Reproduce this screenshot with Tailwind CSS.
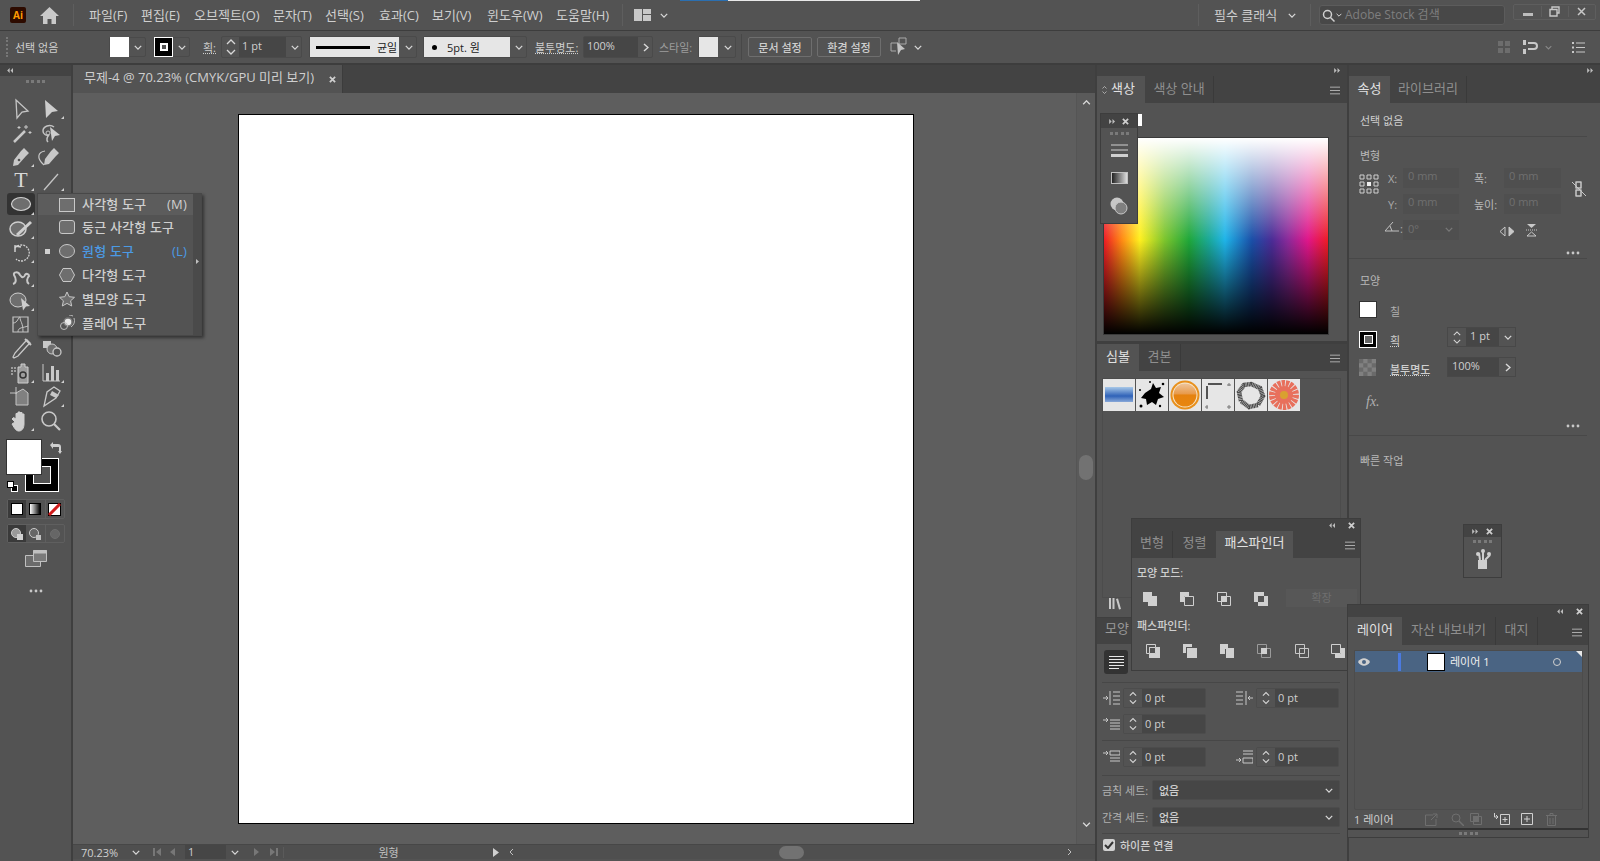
<!DOCTYPE html>
<html lang="ko">
<head>
<meta charset="UTF-8">
<title>Illustrator</title>
<script src="https://cdn.jsdelivr.net/npm/@tailwindcss/browser@4"></script>
</head>
<body class="relative w-[1600px] h-[861px] overflow-hidden bg-[#535353] text-[#cfcfcf] text-[12px] leading-none font-['Open_Sans','Noto_Sans_CJK_KR',sans-serif]">
<svg class="hidden">
  <symbol id="chev" viewBox="0 0 10 6"><path d="M1 1l4 4 4-4" fill="none" stroke="#d8d8d8" stroke-width="1.6"/></symbol>
  <symbol id="updown" viewBox="0 0 10 18"><path d="M1 6l4-4 4 4M1 12l4 4 4-4" fill="none" stroke="#d8d8d8" stroke-width="1.3"/></symbol>
  <symbol id="burger" viewBox="0 0 12 10"><path d="M0 1h12M0 5h12M0 9h12" stroke="#c0c0c0" stroke-width="1"/></symbol>
  <symbol id="dots" viewBox="0 0 14 4"><circle cx="2" cy="2" r="1.4" fill="#c8c8c8"/><circle cx="7" cy="2" r="1.4" fill="#c8c8c8"/><circle cx="12" cy="2" r="1.4" fill="#c8c8c8"/></symbol>
  <symbol id="close" viewBox="0 0 8 8"><path d="M1 1l6 6M7 1l-6 6" stroke="#cfcfcf" stroke-width="2"/></symbol>
  <symbol id="right2" viewBox="0 0 8 6"><path d="M0 0l3 3-3 3zM4 0l3 3-3 3z" fill="#bdbdbd"/></symbol>
  <symbol id="left2" viewBox="0 0 8 6"><path d="M3 0L0 3l3 3zM7 0L4 3l3 3z" fill="#bdbdbd"/></symbol>
  <symbol id="corner" viewBox="0 0 30 24"><path d="M28 19v3h-3z" fill="#d0d0d0"/></symbol>
</svg>

<!-- title bar -->
<header class="h-[31px] flex items-center border-b border-[#3d3d3d] relative text-[13px]">
  <div class="absolute left-[680px] top-0 w-[48px] h-[1px] bg-[#2b6fb0]"></div>
  <div class="absolute left-[728px] top-0 w-[192px] h-[1px] bg-[#e8e8e8]"></div>
  <div class="ml-[10px] w-[16px] h-[16px] bg-[#2d0b00] rounded-[2px] text-[#ff9a00] text-[10px] font-bold flex items-center justify-center">Ai</div>
  <svg class="ml-[14px] w-[19px] h-[18px]" viewBox="0 0 19 18"><path d="M9.5 1L0 10h3v8h4.5v-5h4v5H16v-8h3z" fill="#c9c9c9"/></svg>
  <div class="ml-[14px] w-[1px] h-[22px] bg-[#5e5e5e]"></div>
  <div class="ml-[15px] flex">
    <span class="w-[52px]">파일(F)</span><span class="w-[53px]">편집(E)</span><span class="w-[79px]">오브젝트(O)</span><span class="w-[52px]">문자(T)</span><span class="w-[54px]">선택(S)</span><span class="w-[53px]">효과(C)</span><span class="w-[55px]">보기(V)</span><span class="w-[69px]">윈도우(W)</span><span class="w-[66px]">도움말(H)</span>
  </div>
  <div class="w-[1px] h-[22px] bg-[#5e5e5e]"></div>
  <svg class="ml-[11px] w-[17px] h-[12px]" viewBox="0 0 17 12"><path d="M0 0h8v12H0zM9 0h8v5H9zM9 6h8v6H9z" fill="#c8c8c8"/></svg>
  <svg class="ml-[9px] w-[8px] h-[5px]"><use href="#chev"/></svg>
  <div class="ml-auto flex items-center">
    <div class="w-[1px] h-[22px] bg-[#5e5e5e]"></div>
    <span class="ml-[15px] w-[74px]">필수 클래식</span>
    <svg class="w-[8px] h-[5px]"><use href="#chev"/></svg>
    <div class="ml-[14px] w-[1px] h-[22px] bg-[#5e5e5e]"></div>
    <div class="ml-[8px] w-[186px] h-[20px] bg-[#484848] border border-[#5c5c5c] rounded-[3px] flex items-center text-[12px] text-[#7f7f7f]">
      <svg class="ml-[2px] w-[13px] h-[13px]" viewBox="0 0 13 13"><circle cx="5.5" cy="5.5" r="4" fill="none" stroke="#d0d0d0" stroke-width="1.5"/><path d="M8.5 8.5l4 4" stroke="#d0d0d0" stroke-width="1.5"/></svg>
      <svg class="ml-[1px] w-[6px] h-[4px]"><use href="#chev"/></svg>
      <span class="ml-[3px]">Adobe Stock 검색</span>
    </div>
    <div class="ml-[8px] mr-[4px] -mt-[7px] w-[83px] h-[16px] border border-[#5e5e5e] rounded-[2px] flex items-center">
      <div class="w-[28px] flex justify-center"><div class="w-[10px] h-[3px] mt-[5px] bg-[#bdbdbd]"></div></div>
      <div class="w-[28px] flex justify-center border-x border-[#5e5e5e]"><svg class="w-[11px] h-[11px]" viewBox="0 0 11 11"><path d="M3 3V1h7v6H8M1 3.5h7v6.5H1z" fill="none" stroke="#c8c8c8" stroke-width="1.4"/></svg></div>
      <div class="w-[27px] flex justify-center"><svg class="w-[9px] h-[9px]" viewBox="0 0 9 9"><path d="M1 1l7 7M8 1L1 8" stroke="#c8c8c8" stroke-width="1.5"/></svg></div>
    </div>
  </div>
</header>

<!-- control bar -->
<section class="h-[34px] flex items-center border-b-2 border-[#3d3d3d] text-[11px]">
  <div class="ml-[6px] w-[2px] h-[20px] border-l-2 border-dotted border-[#777]"></div>
  <span class="ml-[7px] w-[94px]">선택 없음</span>
  <div class="w-[37px] h-[20px] flex items-center border border-[#4a4a4a] rounded-[2px]"><div class="w-[19px] h-[20px] bg-white"></div><svg class="ml-[5px] w-[8px] h-[5px]"><use href="#chev"/></svg></div>
  <div class="ml-[7px] w-[37px] h-[20px] flex items-center border border-[#4a4a4a] rounded-[2px]"><div class="w-[19px] h-[20px] bg-black border border-white flex items-center justify-center"><div class="w-[8px] h-[8px] border-2 border-white bg-[#535353]"></div></div><svg class="ml-[5px] w-[8px] h-[5px]"><use href="#chev"/></svg></div>
  <span class="ml-[13px] w-[18px] underline decoration-dotted">획:</span>
  <div class="w-[81px] h-[22px] flex items-center border border-[#4a4a4a] rounded-[2px]">
    <svg class="ml-[4px] w-[10px] h-[18px]"><use href="#updown"/></svg>
    <span class="ml-[3px] w-[47px] h-[20px] bg-[#464646] flex items-center pl-[3px] pb-[3px]">1 pt</span>
    <svg class="ml-[5px] w-[8px] h-[5px]"><use href="#chev"/></svg>
  </div>
  <div class="ml-[7px] w-[108px] h-[22px] flex items-center border border-[#4a4a4a] rounded-[2px]">
    <div class="w-[89px] h-[20px] bg-[#e6e6e6] flex items-center text-[#222]"><div class="ml-[6px] w-[54px] h-[3px] bg-black"></div><span class="ml-[7px]">균일</span></div>
    <svg class="ml-[6px] w-[8px] h-[5px]"><use href="#chev"/></svg>
  </div>
  <div class="ml-[6px] w-[104px] h-[22px] flex items-center border border-[#4a4a4a] rounded-[2px]">
    <div class="w-[86px] h-[20px] bg-[#e6e6e6] flex items-center text-[#222]"><div class="ml-[8px] w-[5px] h-[5px] rounded-full bg-black"></div><span class="ml-[10px]">5pt. 원</span></div>
    <svg class="ml-[5px] w-[8px] h-[5px]"><use href="#chev"/></svg>
  </div>
  <span class="ml-[8px] w-[48px] underline decoration-dotted">불투명도:</span>
  <div class="w-[70px] h-[22px] flex items-center border border-[#4a4a4a] rounded-[2px]">
    <span class="w-[54px] h-[20px] bg-[#464646] flex items-center pl-[3px] pb-[3px]">100%</span>
    <svg class="ml-[5px] w-[6px] h-[9px]" viewBox="0 0 6 9"><path d="M1 1l4 3.5L1 8" fill="none" stroke="#d8d8d8" stroke-width="1.5"/></svg>
  </div>
  <span class="ml-[6px] w-[39px] text-[#9d9d9d]">스타일:</span>
  <div class="w-[38px] h-[22px] flex items-center border border-[#4a4a4a] rounded-[2px]"><div class="w-[19px] h-[20px] bg-[#e6e6e6]"></div><svg class="ml-[6px] w-[8px] h-[5px]"><use href="#chev"/></svg></div>
  <div class="ml-[5px] w-[1px] h-[26px] bg-[#484848]"></div>
  <button class="ml-[6px] w-[64px] h-[20px] border border-[#6e6e6e] rounded-[2px] font-medium">문서 설정</button>
  <button class="ml-[5px] w-[64px] h-[20px] border border-[#6e6e6e] rounded-[2px] font-medium">환경 설정</button>
  <svg class="ml-[9px] w-[18px] h-[20px]" viewBox="0 0 18 20"><path d="M1 6h6M1 6v8h5M9 1h7v6h-7z" fill="none" stroke="#aaa"/><path d="M7 5l8 7-4 1-3 5z" fill="#c4c4c4"/></svg>
  <svg class="ml-[6px] w-[8px] h-[5px]"><use href="#chev"/></svg>
  <div class="ml-auto flex items-center mr-[15px]">
    <svg class="w-[12px] h-[12px]" viewBox="0 0 12 12"><path d="M0 0h5v5H0zM7 0h5v5H7zM0 7h5v5H0zM7 7h5v5H7z" fill="#6d6d6d"/></svg>
    <svg class="ml-[13px] w-[16px] h-[14px]" viewBox="0 0 16 14"><path d="M0 0h3v5H0zM0 9h3v5H0zM5 2h6a4 4 0 0 1 0 8H5v-2h6a2 2 0 0 0 0-4H5z" fill="#c8c8c8"/></svg>
    <svg class="ml-[6px] w-[7px] h-[5px] opacity-40"><use href="#chev"/></svg>
    <svg class="ml-[20px] w-[13px] h-[11px]" viewBox="0 0 13 11"><path d="M4 1h9M4 5.5h9M4 10h9" stroke="#c8c8c8"/><path d="M0 0h2v2H0zM0 4.500h2v2H0zM0 9h2v2H0z" fill="#c8c8c8"/></svg>
  </div>
</section>

<!-- main -->
<main class="flex h-[796px]">
  <!-- tools -->
  <aside class="w-[73px] border-r-2 border-[#3f3f3f] flex flex-col">
    <div class="h-[11px] bg-[#434343] flex items-center pl-[7px]"><svg class="w-[7px] h-[5px]"><use href="#left2"/></svg></div>
    <div class="h-[21px] flex justify-center items-start pt-[4px]"><div class="w-[19px] h-[3px] border-t-[3px] border-dotted border-[#7a7a7a]"></div></div>
    <div class="grid grid-cols-[30px_30px] auto-rows-[24px] ml-[6px] w-[60px]">
      <svg viewBox="0 0 30 24"><path d="M10 3l12 11-6 1-5 6z" fill="none" stroke="#c4c4c4" stroke-width="1.3"/></svg>
      <svg viewBox="0 0 30 24"><path d="M9 3l13 11-6 1-6 6z" fill="#cdcdcd"/><use href="#corner"/></svg>
      <svg viewBox="0 0 30 24"><path d="M8 21L19 10" stroke="#c8c8c8" stroke-width="2.5"/><path d="M20 4v4M18 6h4M24 10v3M22.500 11.500h3M13 5v3M11.500 6.500h3" stroke="#c8c8c8"/></svg>
      <svg viewBox="0 0 30 24"><path d="M18 6c-4-3-11-1-11 4 0 3 3 5 6 4-2 2-3 5-1 7" fill="none" stroke="#c4c4c4" stroke-width="1.5"/><circle cx="12" cy="12" r="2" fill="none" stroke="#c4c4c4"/><path d="M14 6l10 8-5 1-3 5z" fill="#cdcdcd"/></svg>
      <svg viewBox="0 0 30 24"><path d="M18 3l5 5-3 3-8 9-5 1 1-6 7-9z" fill="#c8c8c8"/><circle cx="13" cy="15" r="1.300" fill="#535353"/><use href="#corner"/></svg>
      <svg viewBox="0 0 30 24"><path d="M18 3l5 5-3 3-7 8-5 1 1-6 6-8z" fill="#c8c8c8"/><path d="M8 20C0 13 2 7 9 6" fill="none" stroke="#c8c8c8" stroke-width="1.2"/></svg>
      <svg viewBox="0 0 30 24"><text x="15" y="18" text-anchor="middle" font-family="Liberation Serif" font-weight="400" font-size="22" fill="#d8d8d8">T</text><use href="#corner"/></svg>
      <svg viewBox="0 0 30 24"><path d="M8 21L22 5" stroke="#c4c4c4" stroke-width="1.4"/><use href="#corner"/></svg>
      <svg viewBox="0 0 30 24"><rect x="1" y="0" width="28" height="22" rx="3" fill="#333"/><ellipse cx="15" cy="11" rx="9.500" ry="6.500" fill="#6e6e6e" stroke="#cfcfcf" stroke-width="1.2"/><use href="#corner"/></svg>
      <div></div>
      <svg viewBox="0 0 30 24"><ellipse cx="12" cy="12" rx="8" ry="7" fill="#6e6e6e" stroke="#cfcfcf" stroke-width="1.5"/><path d="M11 18L25 5" stroke="#cfcfcf" stroke-width="3"/><use href="#corner"/></svg>
      <div></div>
      <svg viewBox="0 0 30 24"><path d="M9 7a8 8 0 1 1 1 11" fill="none" stroke="#cfcfcf" stroke-width="1.3" stroke-dasharray="2 1" /><path d="M9 11V5l6 1" fill="none" stroke="#cfcfcf" stroke-width="1.5"/><use href="#corner"/></svg>
      <div></div>
      <svg viewBox="0 0 30 24"><path d="M7 19c4-1 3-6 1-9-1-3 4-4 6 0 2 3 4 3 5 0 1-2 4-1 4 1-2 2-3 6 0 8" fill="none" stroke="#c8c8c8" stroke-width="2"/><use href="#corner"/></svg>
      <div></div>
      <svg viewBox="0 0 30 24"><ellipse cx="12" cy="11" rx="8" ry="7" fill="#6e6e6e" stroke="#cfcfcf"/><path d="M9 11h.01M12 11h.01M15 11h.01" stroke="#fff" stroke-width="1.500"/><path d="M15 9l9 8-4 .5-3 4z" fill="#cdcdcd"/><use href="#corner"/></svg>
      <div></div>
      <svg viewBox="0 0 30 24"><path d="M7 4h15v15H7z" fill="none" stroke="#c4c4c4" stroke-width="1.2"/><path d="M7 10c5 0 5-6 7-6M12 19c0-5 5-4 10-6M14 4c0 5 3 5 3 15" fill="none" stroke="#c4c4c4"/></svg>
      <div></div>
      <svg viewBox="0 0 30 24"><path d="M21 3l3 3-3 3-9 10-4 2-1-1 2-4 9-10z" fill="none" stroke="#c8c8c8" stroke-width="1.300"/><path d="M19 2l6 6" stroke="#c8c8c8" stroke-width="2"/></svg>
      <svg viewBox="0 0 30 24"><path d="M7 4h8v7H7z" fill="#c8c8c8"/><circle cx="16" cy="12" r="5" fill="#6e6e6e" stroke="#c8c8c8"/><circle cx="21" cy="15" r="4" fill="#535353" stroke="#c8c8c8" stroke-width="1.300"/></svg>
      <svg viewBox="0 0 30 24"><path d="M5 6h2v2H5zM8 6h2v2H8zM5 9h2v2H5zM8 9h2v2H8zM5 12h2v2H5z" fill="#9c9c9c"/><path d="M15 3h4v3h3v16h-10V6h3z" fill="#9c9c9c" stroke="#cfcfcf"/><circle cx="17" cy="14" r="3" fill="none" stroke="#333" stroke-width="1.500"/><use href="#corner"/></svg>
      <svg viewBox="0 0 30 24"><path d="M7 3v17h17" fill="none" stroke="#c8c8c8"/><path d="M10 12h3v8h-3zM15 5h3v15h-3zM20 9h3v11h-3z" fill="#c8c8c8"/><use href="#corner"/></svg>
      <svg viewBox="0 0 30 24"><path d="M10 8l7-4 5 4v12H10z" fill="#808080" stroke="#c4c4c4"/><path d="M4 8h7M10 2v7" stroke="#c4c4c4"/></svg>
      <svg viewBox="0 0 30 24"><path d="M18 2l6 4-4 7-12 8 3-14z" fill="none" stroke="#c8c8c8" stroke-width="1.300"/><path d="M16 6l7 4-3 3-6-3z" fill="#c8c8c8"/><use href="#corner"/></svg>
      <svg viewBox="0 0 30 24"><path d="M9 13l-3-3 1.500-1.500L10 10V4.500h2V10V3h2v7V3.500h2V10V5h2v10c0 4-2 7-5 7s-4-2-7-7z" fill="#cfcfcf" stroke="#cfcfcf"/><use href="#corner"/></svg>
      <svg viewBox="0 0 30 24"><circle cx="13" cy="10" r="7" fill="none" stroke="#c8c8c8" stroke-width="1.600"/><path d="M18 15l6 6" stroke="#c8c8c8" stroke-width="2.200"/></svg>
    </div>
    <div class="relative h-[62px] mt-[7px]">
      <div class="absolute left-[25px] top-[18px] w-[34px] h-[34px] bg-black border border-white flex items-center justify-center"><div class="w-[18px] h-[18px] bg-[#535353] border border-white"></div></div>
      <div class="absolute left-[6px] -top-[1px] w-[36px] h-[36px] bg-white border border-[#333]"></div>
      <svg class="absolute left-[50px] top-[2px] w-[12px] h-[12px]" viewBox="0 0 12 12"><path d="M0 3l3-3v2h5a3 3 0 0 1 3 3v4h1l-2 3-2-3h1V5H3v2z" fill="#cfcfcf"/></svg>
      <div class="absolute left-[11px] top-[45px] w-[7px] h-[7px] bg-black border border-white"></div>
      <div class="absolute left-[7px] top-[41px] w-[7px] h-[7px] bg-white border border-black"></div>
    </div>
    <div class="ml-[7px] -mt-[3px] w-[58px] h-[20px] flex border border-[#5f5f5f] rounded-[2px]">
      <div class="w-[19px] bg-[#3a3a3a] flex items-center justify-center"><div class="w-[12px] h-[12px] bg-white border border-black"></div></div>
      <div class="w-[20px] flex items-center justify-center border-r border-[#5f5f5f]"><div class="w-[12px] h-[12px] border border-black bg-[linear-gradient(to_right,white,black)]"></div></div>
      <div class="w-[19px] flex items-center justify-center"><svg class="w-[13px] h-[13px]" viewBox="0 0 13 13"><rect x=".5" y=".5" width="12" height="12" fill="#fff" stroke="#000"/><path d="M1 12L12 1" stroke="#d01c1c" stroke-width="3"/></svg></div>
    </div>
    <div class="ml-[7px] mt-[5px] w-[58px] h-[19px] flex border border-[#5f5f5f] rounded-[2px]">
      <div class="w-[19px] bg-[#3a3a3a] flex items-center justify-center"><svg class="w-[12px] h-[12px]" viewBox="0 0 12 12"><circle cx="5" cy="5" r="4.500" fill="#999" stroke="#ccc"/><path d="M6 6h6v6H6z" fill="#d0d0d0"/></svg></div>
      <div class="w-[20px] flex items-center justify-center border-r border-[#5f5f5f]"><svg class="w-[12px] h-[12px]" viewBox="0 0 12 12"><circle cx="5" cy="5" r="4.500" fill="#666" stroke="#ccc"/><path d="M7 7h5v5H7z" fill="#c0c0c0"/></svg></div>
      <div class="w-[19px] flex items-center justify-center"><svg class="w-[10px] h-[10px]" viewBox="0 0 10 10"><circle cx="5" cy="5" r="4.500" fill="#666" stroke="#6e6e6e"/></svg></div>
    </div>
    <svg class="ml-[25px] mt-[7px] w-[22px] h-[17px]" viewBox="0 0 22 17"><path d="M.5 5.500h15v11H.5z" fill="#6c6c6c" stroke="#c0c0c0"/><path d="M8.500.5h13v11h-13z" fill="#7a7a7a" stroke="#c0c0c0"/><path d="M8 .5h14v3H8z" fill="#c0c0c0"/></svg>
    <svg class="ml-[29px] mt-[22px] w-[14px] h-[4px]"><use href="#dots"/></svg>
  </aside>

  <!-- document -->
  <section class="w-[1022px] flex flex-col">
    <div class="h-[28px] bg-[#434343] flex">
      <div class="w-[270px] bg-[#535353] flex items-center pl-[11px] pb-[3px] text-[13px] border-r border-[#3c3c3c]">무제-4 @ 70.23% (CMYK/GPU 미리 보기)<svg class="ml-[15px] mt-[3px] w-[7px] h-[7px]"><use href="#close"/></svg></div>
    </div>
    <div class="h-[751px] flex">
      <div class="w-[1003px] bg-[#5e5e5e] pl-[165px] pt-[21px]">
        <div class="w-[676px] h-[710px] bg-white border-[1.500px] border-black"></div>
      </div>
      <div class="w-[19px] bg-[#5a5a5a] flex flex-col items-center pt-[7px] border-l border-[#555]">
        <svg class="w-[9px] h-[5px] rotate-180"><use href="#chev"/></svg>
        <div class="mt-[350px] w-[14px] h-[25px] rounded-full bg-[#727272]"></div>
        <svg class="mt-[342px] w-[9px] h-[5px]"><use href="#chev"/></svg>
      </div>
    </div>
    <div class="h-[15px] bg-[#4f4f4f] flex items-center text-[11px] border-t border-[#474747] text-[#cfcfcf]">
      <span class="ml-[8px] w-[46px]">70.23%</span>
      <svg class="ml-[5px] w-[8px] h-[5px]"><use href="#chev"/></svg>
      <svg class="ml-[13px] w-[9px] h-[8px]" viewBox="0 0 9 8"><path d="M0 0h2v8H0zM8 0v8L3 4z" fill="#777"/></svg>
      <svg class="ml-[8px] w-[6px] h-[8px]" viewBox="0 0 6 8"><path d="M5 0v8L0 4z" fill="#777"/></svg>
      <span class="ml-[9px] w-[41px] h-[14px] bg-[#464646] pl-[3px] pt-[1px]">1</span>
      <svg class="ml-[5px] w-[8px] h-[5px]"><use href="#chev"/></svg>
      <svg class="ml-[15px] w-[6px] h-[8px]" viewBox="0 0 6 8"><path d="M0 0v8l5-4z" fill="#777"/></svg>
      <svg class="ml-[9px] w-[9px] h-[8px]" viewBox="0 0 9 8"><path d="M9 0H7v8h2zM1 0v8l5-4z" fill="#777"/></svg>
      <span class="ml-[5px] w-[210px] text-center border-l border-[#5a5a5a] text-[#c0c0c0]">원형</span>
      <svg class="w-[6px] h-[9px]" viewBox="0 0 6 9"><path d="M0 0v9l6-4.500z" fill="#d0d0d0"/></svg>
      <svg class="ml-[10px] w-[5px] h-[8px] rotate-180" viewBox="0 0 5 8"><path d="M1 1l3 3-3 3" fill="none" stroke="#c0c0c0"/></svg>
      <div class="ml-[265px] w-[25px] h-[13px] rounded-full bg-[#727272]"></div>
      <svg class="ml-[263px] w-[5px] h-[8px]" viewBox="0 0 5 8"><path d="M1 1l3 3-3 3" fill="none" stroke="#c0c0c0"/></svg>
    </div>
  </section>

  <!-- panel column 1 -->
  <section class="w-[252px] flex flex-col border-l-2 border-[#3f3f3f]">
    <div class="h-[11px] bg-[#434343] flex items-center justify-end pr-[6px]"><svg class="w-[7px] h-[5px]"><use href="#right2"/></svg></div>
    <div class="h-[266px] border-b border-[#3f3f3f]">
      <div class="h-[27px] bg-[#434343] flex text-[13px]">
        <div class="w-[48px] bg-[#535353] flex items-center pl-[5px] pb-[3px] text-[#e2e2e2]"><svg class="w-[5px] h-[10px] mr-[4px] mt-[3px]"><use href="#updown"/></svg>색상</div>
        <div class="w-[69px] flex items-center justify-center pb-[3px] text-[#8f8f8f] border-r border-[#3a3a3a]">색상 안내</div>
        <svg class="ml-auto mr-[7px] mt-[10px] w-[10px] h-[9px]"><use href="#burger"/></svg>
      </div>
      <div class="ml-[6px] mt-[34px] w-[226px] h-[198px] border border-[#3a3a3a] bg-[linear-gradient(to_bottom,rgba(255,255,255,1)_0%,rgba(255,255,255,0)_52%,rgba(0,0,0,0)_52%,rgba(0,0,0,1)_100%),linear-gradient(to_right,#ee1c25_0%,#ff8a14_8%,#fff01f_16%,#7dc52d_27%,#1fa73a_38%,#1aa99a_47%,#1fb4e8_54%,#1a4fa8_66%,#4b2c96_75%,#8a2a9a_82%,#e0168a_91%,#ee1c25_100%)]"></div>
    </div>
    <div class="h-[275px] border-t-2 border-[#3f3f3f] relative">
      <div class="h-[27px] bg-[#434343] flex text-[13px]">
        <div class="w-[42px] bg-[#535353] flex items-center justify-center pb-[2px] text-[#e2e2e2]">심볼</div>
        <div class="w-[42px] flex items-center justify-center pb-[2px] text-[#8f8f8f] border-r border-[#3a3a3a]">견본</div>
        <svg class="ml-auto mr-[7px] mt-[10px] w-[10px] h-[9px]"><use href="#burger"/></svg>
      </div>
      <div class="ml-[5px] mt-[7px] w-[239px] h-[220px] border border-[#4c4c4c] flex gap-[1px] items-start">
        <svg class="w-[32px] h-[32px] bg-[#e6e6e6]" viewBox="0 0 32 32"><defs><linearGradient id="gb" x1="0" y1="0" x2="0" y2="1"><stop offset="0" stop-color="#a8c8e8"/><stop offset=".6" stop-color="#2f62b8"/><stop offset="1" stop-color="#88a8d8"/></linearGradient></defs><rect x="2" y="8" width="28" height="15" fill="url(#gb)"/></svg>
        <svg class="w-[32px] h-[32px] bg-[#e6e6e6]" viewBox="0 0 32 32"><path d="M9 14l6-4 2-6 3 5 5-1-2 6 5 4-6 2-2 6-4-3-5 3-1-6-5-1z" fill="#000"/><circle cx="27" cy="5" r="1.300"/><circle cx="5" cy="27" r="1.500"/><circle cx="14" cy="3" r="1"/><circle cx="4" cy="11" r="1"/><circle cx="24" cy="27" r="1.200"/></svg>
        <svg class="w-[32px] h-[32px] bg-[#e6e6e6]" viewBox="0 0 32 32"><defs><linearGradient id="go" x1="0" y1="0" x2="0" y2="1"><stop offset="0" stop-color="#eec49a"/><stop offset=".45" stop-color="#e89a4a"/><stop offset=".5" stop-color="#e5820f"/><stop offset="1" stop-color="#e8860f"/></linearGradient></defs><circle cx="16" cy="16" r="14.500" fill="#e8901c"/><circle cx="16" cy="16" r="12.500" fill="#f6e6cc"/><circle cx="16" cy="16" r="11.500" fill="url(#go)"/></svg>
        <svg class="w-[32px] h-[32px] bg-[#e6e6e6]" viewBox="0 0 32 32"><path d="M6 5h14" stroke="#222" stroke-width="1.500"/><path d="M5 7v13" stroke="#222" stroke-width="1.500"/><path d="M27 4v3M25 6h4M3 28h3M5 26v4M27 26v4M25 28h4" stroke="#777"/></svg>
        <svg class="w-[32px] h-[32px] bg-[#e6e6e6]" viewBox="0 0 32 32"><path d="M16 5l9 4 3 8-5 9-9 2-8-6-2-9 5-7z" fill="none" stroke="#4a4a4a" stroke-width="4.500" stroke-dasharray="1.200 .4"/></svg>
        <svg class="w-[32px] h-[32px] bg-[#e6e6e6]" viewBox="0 0 32 32"><circle cx="16" cy="16" r="11" fill="none" stroke="#e8705c" stroke-width="8" stroke-dasharray="3 .8"/><circle cx="16" cy="16" r="9" fill="#e8705c"/><circle cx="16" cy="16" r="4" fill="#d9a030"/></svg>
      </div>
      <svg class="absolute left-[12px] top-[254px] w-[14px] h-[12px]" viewBox="0 0 14 12"><path d="M0 0h2v11H0zM3.500 0h2v11h-2zM7 1l2-.5 3 10.500-2 .5z" fill="#c8c8c8"/></svg>
    </div>
    <!-- character / paragraph -->
    <div class="h-[242px] border-t border-[#3f3f3f] text-[11px]">
      <div class="h-[26px] bg-[#434343] flex text-[13px]"><div class="w-[48px] flex items-center pl-[8px] pb-[6px] text-[#999]">모양</div></div>
      <div class="ml-[7px] mt-[6px] w-[24px] h-[24px] rounded-[3px] bg-[#333] flex items-center justify-center"><svg class="w-[15px] h-[13px]" viewBox="0 0 15 13"><path d="M0 .5h15M0 3.500h15M0 6.500h15M0 9.500h15M0 12.500h10" stroke="#e8e8e8"/></svg></div>
      <div class="mx-[5px] mt-[8px] h-[1px] w-[238px] bg-[#474747]"></div>
      <div class="mt-[5px] ml-[6px] flex items-center h-[20px]">
        <svg class="w-[17px] h-[14px]" viewBox="0 0 17 14"><path d="M0 7h5M3 5l2 2-2 2" stroke="#c8c8c8" fill="none"/><path d="M7 0v14M10 1h7M10 5h7M10 9h7M10 13h7" stroke="#c8c8c8"/></svg>
        <div class="ml-[3px] w-[83px] h-[20px] rounded-[2px] bg-[#464646] border border-[#4c4c4c] flex items-center"><span class="w-[18px] h-[18px] bg-[#535353] flex items-center justify-center"><svg class="w-[8px] h-[14px]"><use href="#updown"/></svg></span><span class="pl-[3px] pb-[2px]">0 pt</span></div>
        <svg class="ml-[30px] w-[17px] h-[14px]" viewBox="0 0 17 14"><path d="M12 7h5M14 5l-2 2 2 2" stroke="#c8c8c8" fill="none"/><path d="M10 0v14M0 1h7M0 5h7M0 9h7M0 13h7" stroke="#c8c8c8"/></svg>
        <div class="ml-[3px] w-[83px] h-[20px] rounded-[2px] bg-[#464646] border border-[#4c4c4c] flex items-center"><span class="w-[18px] h-[18px] bg-[#535353] flex items-center justify-center"><svg class="w-[8px] h-[14px]"><use href="#updown"/></svg></span><span class="pl-[3px] pb-[2px]">0 pt</span></div>
      </div>
      <div class="mt-[6px] ml-[6px] flex items-center h-[20px]">
        <svg class="w-[17px] h-[14px]" viewBox="0 0 17 14"><path d="M0 3h5M3 1l2 2-2 2" stroke="#c8c8c8" fill="none"/><path d="M7 3h10M7 6h10M7 9h10M7 12h10" stroke="#c8c8c8"/></svg>
        <div class="ml-[3px] w-[83px] h-[20px] rounded-[2px] bg-[#464646] border border-[#4c4c4c] flex items-center"><span class="w-[18px] h-[18px] bg-[#535353] flex items-center justify-center"><svg class="w-[8px] h-[14px]"><use href="#updown"/></svg></span><span class="pl-[3px] pb-[2px]">0 pt</span></div>
      </div>
      <div class="mx-[5px] mt-[6px] h-[1px] w-[238px] bg-[#474747]"></div>
      <div class="mt-[6px] ml-[6px] flex items-center h-[20px]">
        <svg class="w-[17px] h-[14px]" viewBox="0 0 17 14"><path d="M0 3h5M3 1l2 2-2 2" stroke="#c8c8c8" fill="none"/><path d="M7 1h10v4H7zM7 8h10M7 11h10" stroke="#c8c8c8" fill="none"/></svg>
        <div class="ml-[3px] w-[83px] h-[20px] rounded-[2px] bg-[#464646] border border-[#4c4c4c] flex items-center"><span class="w-[18px] h-[18px] bg-[#535353] flex items-center justify-center"><svg class="w-[8px] h-[14px]"><use href="#updown"/></svg></span><span class="pl-[3px] pb-[2px]">0 pt</span></div>
        <svg class="ml-[30px] w-[17px] h-[14px]" viewBox="0 0 17 14"><path d="M0 10h5M3 8l2 2-2 2" stroke="#c8c8c8" fill="none"/><path d="M7 1h10M7 4h10M7 8h10v5H7z" stroke="#c8c8c8" fill="none"/></svg>
        <div class="ml-[3px] w-[83px] h-[20px] rounded-[2px] bg-[#464646] border border-[#4c4c4c] flex items-center"><span class="w-[18px] h-[18px] bg-[#535353] flex items-center justify-center"><svg class="w-[8px] h-[14px]"><use href="#updown"/></svg></span><span class="pl-[3px] pb-[2px]">0 pt</span></div>
      </div>
      <div class="mx-[5px] mt-[8px] h-[1px] w-[238px] bg-[#474747]"></div>
      <div class="mt-[4px] ml-[5px] flex items-center h-[20px]">
        <span class="w-[50px] text-[#b0b0b0]">금칙 세트:</span>
        <div class="w-[188px] h-[20px] rounded-[2px] bg-[#464646] border border-[#4c4c4c] flex items-center justify-between px-[6px] font-medium">없음<svg class="w-[8px] h-[5px]"><use href="#chev"/></svg></div>
      </div>
      <div class="mt-[7px] ml-[5px] flex items-center h-[20px]">
        <span class="w-[50px] text-[#b0b0b0]">간격 세트:</span>
        <div class="w-[188px] h-[20px] rounded-[2px] bg-[#464646] border border-[#4c4c4c] flex items-center justify-between px-[6px] font-medium">없음<svg class="w-[8px] h-[5px]"><use href="#chev"/></svg></div>
      </div>
      <div class="mx-[5px] mt-[6px] h-[1px] w-[238px] bg-[#474747]"></div>
      <div class="mt-[5px] ml-[6px] flex items-center font-medium">
        <div class="w-[12px] h-[12px] rounded-[2px] bg-[#d0d0d0] flex items-center justify-center"><svg class="w-[10px] h-[8px]" viewBox="0 0 10 8"><path d="M1 4l3 3 5-6" fill="none" stroke="#333" stroke-width="2"/></svg></div>
        <span class="ml-[5px]">하이픈 연결</span>
      </div>
    </div>
  </section>

  <!-- panel column 2 -->
  <section class="w-[253px] flex flex-col border-l-2 border-[#3f3f3f] text-[11px]">
    <div class="h-[11px] bg-[#434343] flex items-center justify-end pr-[6px]"><svg class="w-[7px] h-[5px]"><use href="#right2"/></svg></div>
    <div class="h-[27px] bg-[#434343] flex text-[13px]">
      <div class="w-[41px] bg-[#535353] flex items-center justify-center pb-[3px] text-[#e2e2e2]">속성</div>
      <div class="w-[77px] flex items-center justify-center pb-[3px] text-[#8f8f8f] border-r border-[#3a3a3a]">라이브러리</div>
    </div>
    <p class="ml-[11px] mt-[12px] h-[11px]">선택 없음</p>
    <div class="mt-[10px] h-[1px] w-[238px] bg-[#484848]"></div>
    <p class="ml-[11px] mt-[13px] h-[12px] text-[#b8b8b8]">변형</p>
    <div class="relative h-[88px] mt-[6px]">
      <svg class="absolute left-[10px] top-[6px] w-[20px] h-[20px]" viewBox="0 0 20 20"><path d="M1 1h4v4H1zM8 1h4v4H8zM15 1h4v4h-4zM1 8h4v4H1zM15 8h4v4h-4zM1 15h4v4H1zM8 15h4v4H8zM15 15h4v4h-4z" fill="none" stroke="#d0d0d0"/><path d="M8 8h4v4H8z" fill="#eee"/></svg>
      <span class="absolute left-[39px] top-[5px] text-[#aaa]">X:</span>
      <div class="absolute left-[54px] top-0 w-[56px] h-[20px] bg-[#4f4f4f] text-[#6f6f6f] pl-[5px] pt-[2px]">0 mm</div>
      <span class="absolute left-[125px] top-[5px] text-[#b8b8b8]">폭:</span>
      <div class="absolute left-[155px] top-0 w-[57px] h-[20px] bg-[#4f4f4f] text-[#6f6f6f] pl-[5px] pt-[2px]">0 mm</div>
      <span class="absolute left-[39px] top-[31px] text-[#aaa]">Y:</span>
      <div class="absolute left-[54px] top-[26px] w-[56px] h-[20px] bg-[#4f4f4f] text-[#6f6f6f] pl-[5px] pt-[2px]">0 mm</div>
      <span class="absolute left-[125px] top-[31px] text-[#b8b8b8]">높이:</span>
      <div class="absolute left-[155px] top-[26px] w-[57px] h-[20px] bg-[#4f4f4f] text-[#6f6f6f] pl-[5px] pt-[2px]">0 mm</div>
      <svg class="absolute left-[222px] top-[12px] w-[16px] h-[18px]" viewBox="0 0 16 18"><path d="M5 2h5v6H5zM5 10h5v6H5z" fill="none" stroke="#c8c8c8" stroke-width="1.500" stroke-linejoin="round"/><path d="M1 2l14 14" stroke="#c8c8c8"/></svg>
      <svg class="absolute left-[36px] top-[53px] w-[14px] h-[11px]" viewBox="0 0 14 11"><path d="M0 10h14M0 10L8 1M5 5l2 5" fill="none" stroke="#c0c0c0"/></svg>
      <span class="absolute left-[51px] top-[55px] text-[#aaa]">:</span>
      <div class="absolute left-[54px] top-[52px] w-[56px] h-[20px] bg-[#4f4f4f] text-[#6f6f6f] pl-[5px] pt-[3px] flex justify-between pr-[6px]">0°<svg class="w-[8px] h-[5px] mt-[4px] opacity-30"><use href="#chev"/></svg></div>
      <svg class="absolute left-[151px] top-[58px] w-[14px] h-[11px]" viewBox="0 0 14 11"><path d="M5 1v9L0 5.500zM9 1v9l5-4.500z" fill="none" stroke="#c8c8c8"/><path d="M9 1v9l5-4.500z" fill="#c8c8c8"/></svg>
      <svg class="absolute left-[177px] top-[55px] w-[11px] h-[14px]" viewBox="0 0 11 14"><path d="M1 1h9L5.500 5z" fill="#c8c8c8"/><path d="M1 13h9L5.500 9z" fill="none" stroke="#c8c8c8"/><path d="M0 7h11" stroke="#c8c8c8" stroke-dasharray="1 1"/></svg>
      <svg class="absolute left-[217px] top-[83px] w-[14px] h-[4px]"><use href="#dots"/></svg>
    </div>
    <div class="mt-[2px] h-[1px] w-[238px] bg-[#484848]"></div>
    <p class="ml-[11px] mt-[16px] h-[12px] text-[#b8b8b8]">모양</p>
    <div class="relative h-[134px] mt-[14px]">
      <div class="absolute left-[10px] top-0 w-[18px] h-[17px] bg-white border border-[#333]"></div>
      <span class="absolute left-[41px] top-[5px] text-[#b0b0b0]">칠</span>
      <div class="absolute left-[10px] top-[30px] w-[18px] h-[17px] bg-black border border-white flex items-center justify-center"><div class="w-[9px] h-[9px] bg-[#666] border border-white"></div></div>
      <span class="absolute left-[41px] top-[34px] underline decoration-dotted">획</span>
      <div class="absolute left-[98px] top-[26px] w-[69px] h-[20px] border border-[#484848] flex items-center">
        <span class="w-[18px] flex justify-center"><svg class="w-[8px] h-[15px]"><use href="#updown"/></svg></span>
        <span class="w-[33px] h-[18px] bg-[#464646] pl-[4px] pt-[2px]">1 pt</span>
        <svg class="ml-[5px] w-[8px] h-[5px]"><use href="#chev"/></svg>
      </div>
      <svg class="absolute left-[10px] top-[58px] w-[17px] h-[17px]" viewBox="0 0 4 4"><path d="M0 0h4v4H0z" fill="#6a6a6a"/><path d="M1 0h1v1H1zM3 0h1v1H3zM0 1h1v1H0zM2 1h1v1H2zM1 2h1v1H1zM3 2h1v1H3zM0 3h1v1H0zM2 3h1v1H2z" fill="#808080"/></svg>
      <span class="absolute left-[41px] top-[63px] underline decoration-dotted font-medium">불투명도</span>
      <div class="absolute left-[98px] top-[56px] w-[69px] h-[20px] border border-[#484848] flex items-center">
        <span class="w-[51px] h-[18px] bg-[#464646] pl-[4px] pt-[2px]">100%</span>
        <svg class="ml-[6px] w-[6px] h-[9px]" viewBox="0 0 6 9"><path d="M1 1l4 3.500L1 8" fill="none" stroke="#d8d8d8" stroke-width="1.500"/></svg>
      </div>
      <span class="absolute left-[17px] top-[94px] font-['Liberation_Serif',serif] italic text-[14px] text-[#b0b0b0]">fx.</span>
      <svg class="absolute left-[217px] top-[123px] w-[14px] h-[4px]"><use href="#dots"/></svg>
    </div>
    <div class="h-[1px] w-[238px] bg-[#484848]"></div>
    <p class="ml-[11px] mt-[19px] text-[#b8b8b8]">빠른 작업</p>
  </section>
</main>

<!-- floating: tool flyout -->
<div class="absolute left-[37px] top-[193px] w-[165px] h-[143px] bg-[#535353] border border-[#484848] shadow-[2px_2px_3px_rgba(0,0,0,0.45)] flex text-[13px] font-medium tracking-[0.2px]">
  <div class="w-[156px]">
    <div class="h-[21px] bg-[#5c5c5c] flex items-center"><svg class="ml-[21px] w-[16px] h-[14px]" viewBox="0 0 16 14"><rect x=".5" y=".5" width="15" height="13" fill="#6e6e6e" stroke="#c8c8c8"/></svg><span class="ml-[7px] w-[85px]">사각형 도구</span><span>(M)</span></div>
    <div class="h-[24px] flex items-center"><svg class="ml-[21px] w-[16px] h-[14px]" viewBox="0 0 16 14"><rect x=".5" y=".5" width="15" height="13" rx="2.500" fill="#6e6e6e" stroke="#c8c8c8"/></svg><span class="ml-[7px]">둥근 사각형 도구</span></div>
    <div class="h-[24px] flex items-center text-[#4b9ae4]"><div class="ml-[7px] w-[5px] h-[5px] bg-[#d0d0d0]"></div><svg class="ml-[9px] w-[16px] h-[14px]" viewBox="0 0 16 14"><ellipse cx="8" cy="7" rx="7.500" ry="6.500" fill="#6e6e6e" stroke="#c8c8c8"/></svg><span class="ml-[7px] w-[90px]">원형 도구</span><span>(L)</span></div>
    <div class="h-[24px] flex items-center"><svg class="ml-[21px] w-[16px] h-[14px]" viewBox="0 0 16 14"><path d="M4 .5h8L15.500 7 12 13.500H4L.5 7z" fill="#6e6e6e" stroke="#c8c8c8"/></svg><span class="ml-[7px]">다각형 도구</span></div>
    <div class="h-[24px] flex items-center"><svg class="ml-[21px] w-[16px] h-[16px]" viewBox="0 0 16 16"><path d="M8 1l2.200 4.700 5.300.6-3.900 3.500 1.100 5.200L8 12.400 3.300 15l1.100-5.200L.5 6.300l5.300-.6z" fill="#6e6e6e" stroke="#c8c8c8"/></svg><span class="ml-[7px]">별모양 도구</span></div>
    <div class="h-[24px] flex items-center"><svg class="ml-[21px] w-[16px] h-[16px]" viewBox="0 0 16 16"><circle cx="9" cy="7" r="4" fill="#e8e8e8" stroke="#777" stroke-width="1.500"/><circle cx="5" cy="11" r="3.500" fill="none" stroke="#bbb"/><path d="M14 1a8 8 0 0 0-4-1M15 3a8 8 0 0 1-3 9" stroke="#bbb" fill="none"/></svg><span class="ml-[7px]">플레어 도구</span></div>
  </div>
  <div class="w-[8px] bg-[#4a4a4a] flex items-center justify-center"><svg class="w-[3px] h-[5px] mt-[-6px]" viewBox="0 0 3 5"><path d="M0 0l3 2.500L0 5z" fill="#c0c0c0"/></svg></div>
</div>

<!-- floating: collapsed panel on colour -->
<div class="absolute left-[1137px] top-[114px] w-[5px] h-[12px] bg-white"></div>
<div class="absolute left-[1100px] top-[113px] w-[38px] h-[111px] bg-[#535353] border border-[#3d3d3d] flex flex-col items-center">
  <div class="w-full h-[14px] bg-[#434343] flex items-center justify-between px-[8px]"><svg class="w-[7px] h-[5px]"><use href="#right2"/></svg><svg class="w-[7px] h-[7px]"><use href="#close"/></svg></div>
  <div class="mt-[4px] w-[19px] h-[3px] border-t-[3px] border-dotted border-[#7a7a7a]"></div>
  <svg class="mt-[9px] w-[17px] h-[13px]" viewBox="0 0 17 13"><path d="M0 1h17M0 6h17" stroke="#d0d0d0"/><path d="M0 10h17v3H0z" fill="#d0d0d0"/></svg>
  <div class="mt-[15px] w-[17px] h-[12px] border border-[#c0c0c0] bg-[linear-gradient(to_right,#222,#ddd)]"></div>
  <svg class="mt-[13px] w-[18px] h-[18px]" viewBox="0 0 18 18"><circle cx="7" cy="7" r="6.500" fill="#c8c8c8"/><circle cx="11" cy="11" r="6" fill="#808080" stroke="#c8c8c8"/></svg>
</div>

<!-- floating: pathfinder -->
<div class="absolute left-[1131px] top-[518px] w-[230px] h-[153px] bg-[#535353] border border-[#3d3d3d] text-[11px]">
  <div class="h-[12px] bg-[#434343] flex items-center justify-end gap-[12px] pr-[5px]"><svg class="w-[7px] h-[5px]"><use href="#left2"/></svg><svg class="w-[7px] h-[7px]"><use href="#close"/></svg></div>
  <div class="h-[27px] bg-[#434343] flex text-[13px]">
    <div class="w-[41px] flex items-center justify-center pb-[4px] text-[#8f8f8f] border-r border-[#3a3a3a]">변형</div>
    <div class="w-[43px] flex items-center justify-center pb-[4px] text-[#8f8f8f]">정렬</div>
    <div class="w-[77px] bg-[#535353] flex items-center justify-center pb-[4px] text-[#e2e2e2]">패스파인더</div>
    <svg class="ml-auto mr-[5px] mt-[10px] w-[10px] h-[9px]"><use href="#burger"/></svg>
  </div>
  <p class="ml-[5px] mt-[9px] h-[12px] font-medium">모양 모드:</p>
  <div class="relative h-[30px] mt-[10px]">
    <svg class="absolute left-[11px] top-[3px] w-[14px] h-[14px]" viewBox="0 0 14 14"><path d="M0 0h9v4h5v10H5v-4H0z" fill="#d0d0d0"/></svg>
    <svg class="absolute left-[48px] top-[3px] w-[14px] h-[14px]" viewBox="0 0 14 14"><path d="M0 0h9v4H4v6H0z" fill="#d0d0d0"/><path d="M4.500 4.500h9v9h-9z" fill="none" stroke="#d0d0d0"/></svg>
    <svg class="absolute left-[85px] top-[3px] w-[14px] h-[14px]" viewBox="0 0 14 14"><path d="M.5.500h9v9h-9zM4.500 4.500h9v9h-9z" fill="none" stroke="#d0d0d0"/><path d="M4 4h6v6H4z" fill="#d0d0d0"/></svg>
    <svg class="absolute left-[122px] top-[3px] w-[14px] h-[14px]" viewBox="0 0 14 14"><path d="M0 0h10v4H4v6H0zM10 4h4v10H4v-4h6z" fill="#d0d0d0"/></svg>
    <div class="absolute left-[154px] top-0 w-[71px] h-[18px] bg-[#575757] text-[#6f6f6f] text-center pt-[3px]">확장</div>
  </div>
  <p class="ml-[5px] h-[12px] font-medium mt-[1px]">패스파인더:</p>
  <div class="relative h-[30px] mt-[9px]">
    <svg class="absolute left-[14px] top-[3px] w-[14px] h-[14px]" viewBox="0 0 14 14"><path d="M.5.500h9v9h-9z" fill="none" stroke="#d0d0d0"/><path d="M3 3h11v11H3z" fill="#d0d0d0"/><path d="M3.500 3.500h6v6h-6z" fill="#535353" stroke="#d0d0d0"/></svg>
    <svg class="absolute left-[51px] top-[3px] w-[14px] h-[14px]" viewBox="0 0 14 14"><path d="M0 0h9v3H3v6H0z" fill="#d0d0d0"/><path d="M4 4h10v10H4z" fill="#d0d0d0"/></svg>
    <svg class="absolute left-[88px] top-[3px] w-[14px] h-[14px]" viewBox="0 0 14 14"><path d="M0 0h8v5H5v5H0z" fill="#d0d0d0"/><path d="M6 4h8v10H6z" fill="#d0d0d0"/></svg>
    <svg class="absolute left-[125px] top-[3px] w-[14px] h-[14px]" viewBox="0 0 14 14"><path d="M.5.500h9v9h-9zM4.500 4.500h9v9h-9z" fill="none" stroke="#9a9a9a"/><path d="M4 4h6v6H4z" fill="#d0d0d0"/></svg>
    <svg class="absolute left-[163px] top-[3px] w-[14px] h-[14px]" viewBox="0 0 14 14"><path d="M.5.500h9v9h-9zM4.500 4.500h9v9h-9z" fill="none" stroke="#c8c8c8"/></svg>
    <svg class="absolute left-[199px] top-[3px] w-[14px] h-[14px]" viewBox="0 0 14 14"><path d="M.5.500h9v9h-9z" fill="#535353" stroke="#d0d0d0"/><path d="M10 4h4v10H4v-4h6z" fill="#d0d0d0"/></svg>
  </div>
</div>

<!-- floating: collapsed panel on properties -->
<div class="absolute left-[1463px] top-[524px] w-[39px] h-[54px] bg-[#535353] border border-[#3d3d3d] flex flex-col items-center">
  <div class="w-full h-[12px] bg-[#434343] flex items-center justify-between px-[8px]"><svg class="w-[7px] h-[5px]"><use href="#right2"/></svg><svg class="w-[7px] h-[7px]"><use href="#close"/></svg></div>
  <div class="mt-[3px] w-[19px] h-[3px] border-t-[3px] border-dotted border-[#7a7a7a]"></div>
  <svg class="mt-[6px] w-[17px] h-[20px]" viewBox="0 0 17 20"><path d="M4 11h9v9H4z" fill="#cfcfcf"/><path d="M6 11L5 4M9 11V1M11 11l5-5" stroke="#cfcfcf" stroke-width="2"/><circle cx="9" cy="2" r="2" fill="#cfcfcf"/><circle cx="15" cy="5" r="2" fill="#cfcfcf"/><circle cx="4" cy="5" r="2" fill="#cfcfcf"/></svg>
</div>

<!-- floating: layers -->
<div class="absolute left-[1347px] top-[604px] w-[242px] h-[234px] bg-[#535353] border border-[#3d3d3d] text-[11px]">
  <div class="h-[12px] bg-[#434343] flex items-center justify-end gap-[12px] pr-[5px]"><svg class="w-[7px] h-[5px]"><use href="#left2"/></svg><svg class="w-[7px] h-[7px]"><use href="#close"/></svg></div>
  <div class="h-[28px] bg-[#434343] flex text-[13px]">
    <div class="w-[54px] bg-[#535353] flex items-center justify-center pb-[4px] text-[#e2e2e2]">레이어</div>
    <div class="w-[94px] flex items-center justify-center pb-[4px] text-[#8f8f8f] border-r border-[#3a3a3a]">자산 내보내기</div>
    <div class="w-[42px] flex items-center justify-center pb-[4px] text-[#8f8f8f] border-r border-[#3a3a3a]">대지</div>
    <svg class="ml-auto mr-[6px] mt-[11px] w-[10px] h-[9px]"><use href="#burger"/></svg>
  </div>
  <div class="ml-[6px] mt-[5px] w-[229px] h-[160px] border border-[#4c4c4c] rounded-b-[2px]">
    <div class="relative h-[21px] bg-[#4a6483] flex items-center">
      <svg class="ml-[3px] w-[12px] h-[8px]" viewBox="0 0 12 8"><path d="M0 4c3-5 9-5 12 0-3 5-9 5-12 0z" fill="#d0d0d0"/><circle cx="6" cy="4" r="2" fill="#4a6483"/></svg>
      <div class="ml-[28px] w-[3px] h-[18px] bg-[#4b7ae0]"></div>
      <div class="ml-[26px] w-[18px] h-[18px] bg-white border border-black"></div>
      <span class="ml-[5px] w-[103px] text-[#f0f0f0]">레이어 1</span>
      <div class="w-[8px] h-[8px] rounded-full border border-[#d0d0d0]"></div>
      <svg class="absolute right-0 top-0 w-[6px] h-[6px]" viewBox="0 0 6 6"><path d="M0 0h6v6z" fill="#e8e8e8"/></svg>
    </div>
  </div>
  <div class="flex items-center h-[18px] ml-[6px]">
    <span class="w-[71px]">1 레이어</span>
    <svg class="w-[13px] h-[13px]" viewBox="0 0 13 13"><path d="M8 2H.5v10.500H11V6M6 7l6-6M8 1h4v4" fill="none" stroke="#6f6f6f"/></svg>
    <svg class="ml-[13px] w-[13px] h-[13px]" viewBox="0 0 13 13"><circle cx="5" cy="5" r="4" fill="none" stroke="#6f6f6f"/><path d="M8 8l5 5" stroke="#6f6f6f" stroke-width="1.500"/></svg>
    <svg class="ml-[6px] w-[12px] h-[12px]" viewBox="0 0 12 12"><path d="M.5.500h8v8h-8zM3.500 3.500h8v8h-8z" fill="none" stroke="#6f6f6f"/><path d="M3 3h6v6H3z" fill="#6f6f6f"/></svg>
    <svg class="ml-[12px] w-[16px] h-[12px]" viewBox="0 0 16 12"><path d="M.5 0v4h3M2 2l2 2-2 2" stroke="#d0d0d0" fill="none"/><path d="M6.500 1.500h9v10h-9zM11 4v5M8.500 6.500h5" stroke="#d0d0d0" fill="none"/></svg>
    <svg class="ml-[11px] w-[12px] h-[12px]" viewBox="0 0 12 12"><path d="M.5.500h11v11H.5zM6 3v6M3 6h6" stroke="#d0d0d0" fill="none"/></svg>
    <svg class="ml-[13px] w-[11px] h-[13px]" viewBox="0 0 11 13"><path d="M0 2.500h11M4 2V.5h3V2M1.500 3v9.500h8V3M4 5v6M7 5v6" stroke="#6f6f6f" fill="none"/></svg>
  </div>
  <div class="h-[2px] bg-[#333]"></div>
  <div class="h-[6px] flex justify-center items-center"><div class="w-[19px] h-[3px] border-t-[3px] border-dotted border-[#7a7a7a]"></div></div>
</div>
</body>
</html>
